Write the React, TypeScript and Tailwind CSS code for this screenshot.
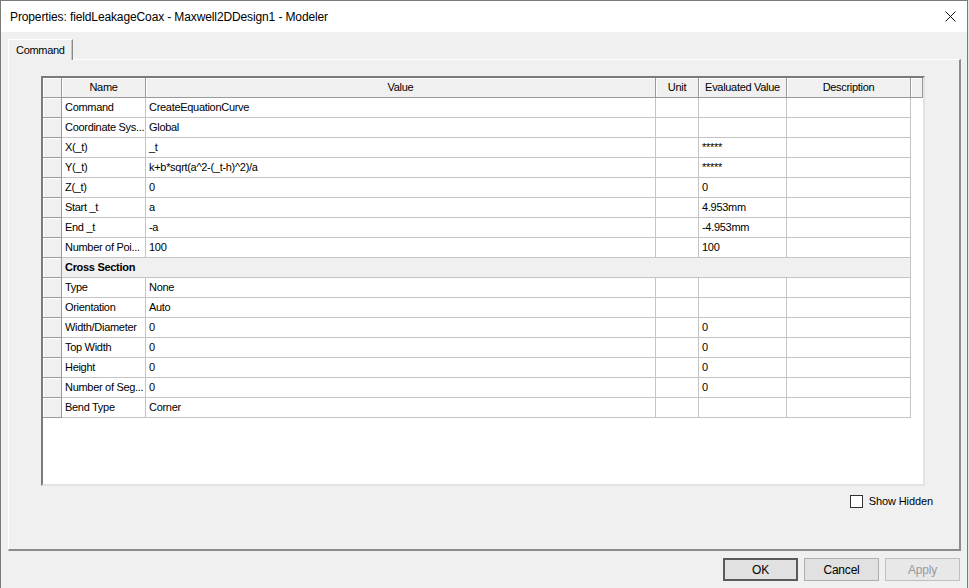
import React from "react";

type Row =
  | { kind: "prop"; name: string; value: string; unit?: string; evaluated?: string }
  | { kind: "section"; title: string };

const rows: Row[] = [
  { kind: "prop", name: "Command", value: "CreateEquationCurve" },
  { kind: "prop", name: "Coordinate Sys...", value: "Global" },
  { kind: "prop", name: "X(_t)", value: "_t", evaluated: "*****" },
  { kind: "prop", name: "Y(_t)", value: "k+b*sqrt(a^2-(_t-h)^2)/a", evaluated: "*****" },
  { kind: "prop", name: "Z(_t)", value: "0", evaluated: "0" },
  { kind: "prop", name: "Start _t", value: "a", evaluated: "4.953mm" },
  { kind: "prop", name: "End _t", value: "-a", evaluated: "-4.953mm" },
  { kind: "prop", name: "Number of Poi...", value: "100", evaluated: "100" },
  { kind: "section", title: "Cross Section" },
  { kind: "prop", name: "Type", value: "None" },
  { kind: "prop", name: "Orientation", value: "Auto" },
  { kind: "prop", name: "Width/Diameter", value: "0", evaluated: "0" },
  { kind: "prop", name: "Top Width", value: "0", evaluated: "0" },
  { kind: "prop", name: "Height", value: "0", evaluated: "0" },
  { kind: "prop", name: "Number of Seg...", value: "0", evaluated: "0" },
  { kind: "prop", name: "Bend Type", value: "Corner" },
];

// raised look used by header cells and row selectors
const raised =
  "bg-[#f0f0f0] border-r border-b border-[#9a9a9a] shadow-[inset_1px_1px_0_#ffffff]";
const cell =
  "flex items-center overflow-hidden whitespace-nowrap border-r border-b border-[#c4c4c4] pl-[3px]";

function HeaderCell({ w, label }: { w: string; label?: string }) {
  return (
    <div className={`${w} ${raised} flex h-full items-center justify-center`}>
      {label}
    </div>
  );
}

function GridRow({ row }: { row: Row }) {
  if (row.kind === "section") {
    return (
      <div className="flex h-[20px]">
        <div className={`w-[19px] ${raised}`} />
        <div className={`w-[849px] ${cell} bg-[#f0f0f0] font-bold`}>{row.title}</div>
        <div className="w-[12px]" />
      </div>
    );
  }
  return (
    <div className="flex h-[20px]">
      <div className={`w-[19px] ${raised}`} />
      <div className={`w-[84px] ${cell}`}>{row.name}</div>
      <div className={`w-[510px] ${cell}`}>{row.value}</div>
      <div className={`w-[43px] ${cell}`}>{row.unit}</div>
      <div className={`w-[88px] ${cell}`}>{row.evaluated}</div>
      <div className={`w-[124px] ${cell}`} />
      <div className="w-[12px]" />
    </div>
  );
}

function Button({ label, primary, disabled }: { label: string; primary?: boolean; disabled?: boolean }) {
  const tone = primary
    ? "border-2 border-[#5a5a5a] bg-[#e1e1e1] text-black"
    : disabled
      ? "border border-[#bfbfbf] bg-[#e8e8e8] text-[#9a9a9a]"
      : "border border-[#adadad] bg-[#e1e1e1] text-black";
  return (
    <button
      className={`flex h-[23px] w-[75px] items-center justify-center text-[12px] tracking-[-0.2px] ${tone}`}
      disabled={disabled}
    >
      {label}
    </button>
  );
}

export default function App() {
  return (
    <div className="h-[588px] w-[969px] overflow-hidden bg-[#e8e8e8] [font-family:'Liberation_Sans',Arial,sans-serif] text-black">
      <div className="flex h-full w-[968px] flex-col border-t border-l border-r border-[#7a7a7a] bg-[#f0f0f0]">
        {/* Title bar */}
        <div className="flex h-[31px] shrink-0 items-center justify-between bg-white pl-[9px] pr-[11px]">
          <span className="text-[12px] tracking-[-0.12px]">Properties: fieldLeakageCoax - Maxwell2DDesign1 - Modeler</span>
          <svg width="11" height="11" viewBox="0 0 11 11" aria-hidden="true">
            <path d="M0.5 0.5 L10.5 10.5 M10.5 0.5 L0.5 10.5" stroke="#111" strokeWidth="1" />
          </svg>
        </div>

        {/* Tab strip */}
        <div className="flex h-[27px] shrink-0 items-end pl-[7px] text-[11px] tracking-[-0.3px]">
          <div className="relative z-10 -mb-px flex h-[21px] items-center border-t border-l border-white border-r border-r-[#8a8a8a] bg-[#f0f0f0] px-[7px] shadow-[inset_-1px_0_0_#c8c8c8]">
            Command
          </div>
        </div>

        {/* Tab page */}
        <div className="ml-[7px] flex h-[492px] w-[953px] shrink-0 flex-col border-t border-l border-white border-r-2 border-b-2 border-r-[#8c8c8c] border-b-[#8c8c8c] text-[11px] tracking-[-0.3px]">
          <div className="ml-[32px] mt-[16px] flex h-[410px] w-[884px] flex-col border-t-2 border-l-2 border-t-[#7a7a7a] border-l-[#7a7a7a] border-r-2 border-b-2 border-r-[#e3e3e3] border-b-[#e3e3e3] bg-white">
            <div className="flex h-[20px] shrink-0">
              <HeaderCell w="w-[19px]" />
              <HeaderCell w="w-[84px]" label="Name" />
              <HeaderCell w="w-[510px]" label="Value" />
              <HeaderCell w="w-[43px]" label="Unit" />
              <HeaderCell w="w-[88px]" label="Evaluated Value" />
              <HeaderCell w="w-[124px]" label="Description" />
              <HeaderCell w="w-[12px]" />
            </div>
            {rows.map((row, i) => (
              <GridRow key={i} row={row} />
            ))}
          </div>

          <div className="mt-[7px] flex items-center justify-end gap-[6px] pr-[26px]">
            <span className="h-[13px] w-[13px] border border-[#333333] bg-white" />
            <span className="text-[11px] tracking-[-0.1px]">Show Hidden</span>
          </div>
        </div>

        {/* Dialog buttons */}
        <div className="mt-[7px] flex justify-end gap-[6px] pr-[7px]">
          <Button label="OK" primary />
          <Button label="Cancel" />
          <Button label="Apply" disabled />
        </div>
      </div>
    </div>
  );
}
